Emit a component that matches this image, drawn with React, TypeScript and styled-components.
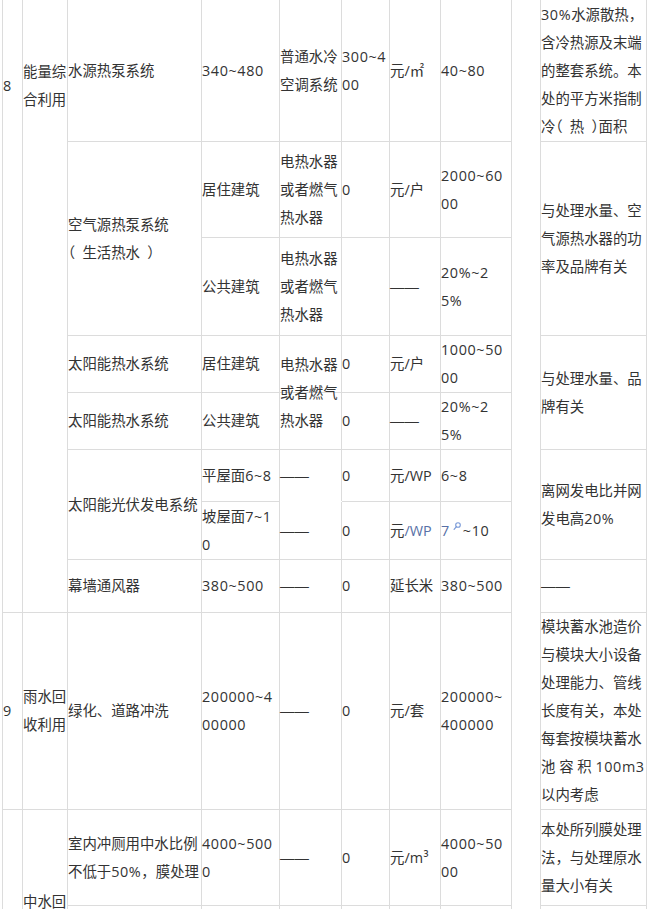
import React from 'react'
import styled, { createGlobalStyle } from 'styled-components'

const line = '#dcdcdc'

const GlobalStyle = createGlobalStyle`
  html, body {
    margin: 0;
    padding: 0;
    background: #fff;
  }
  body {
    overflow: hidden;
  }
`

// the sheet keeps the row heights of the source document, so they are fixed here
const Sheet = styled.div`
  display: grid;
  grid-template-columns: 20px 45px 134px 78px 62px 48px 51px 71px 29px 106px;
  grid-template-rows: 142px 96px 98px 57px 57px 52px 58px 53px 197px 96px 116px;
  width: max-content;
  margin: -1px 0 0 2px;
  border-top: 1px solid ${line};
  border-left: 1px solid ${line};
  font-family: "Open Sans", "Noto Sans CJK SC", sans-serif;
  font-size: 14.4px;
  line-height: 28px;
  color: #333;
  text-spacing-trim: space-all;
`

type CellProps = {
  $c: number
  $r: number
  $rs?: number
  $top?: number
  $open?: boolean
  $over?: boolean
}

const Cell = styled.div<CellProps>`
  grid-column: ${p => p.$c} / span 1;
  grid-row: ${p => p.$r} / span ${p => p.$rs ?? 1};
  display: flex;
  flex-direction: column;
  justify-content: ${p => (p.$top != null ? 'flex-start' : 'center')};
  padding-top: ${p => p.$top ?? 0}px;
  border-right: ${p => (p.$over ? 'none' : `1px solid ${line}`)};
  border-bottom: ${p => (p.$over || p.$open ? 'none' : `1px solid ${line}`)};
  margin-bottom: ${p => (p.$open && !p.$over ? '1px' : '0')};
  white-space: nowrap;
  min-width: 0;
  min-height: 0;
  z-index: ${p => (p.$over ? 1 : 0)};
`

const Lines = styled.div`
  display: block;
`

const Num = styled.span`
  letter-spacing: 0.6px;
`

const Dash = styled.span`
  font-family: "Liberation Sans", sans-serif;
  letter-spacing: 0;
`

// full-width brackets drawn with their open side inwards, as the source font does
const Paren = styled.span<{ $close?: boolean }>`
  font-feature-settings: "halt";
  margin-left: ${p => (p.$close ? '0.5em' : '0')};
  margin-right: ${p => (p.$close ? '0' : '0.5em')};
`

const Link = styled.span`
  color: #5870a6;
`

const Lens = styled.svg`
  width: 8px;
  height: 8px;
  margin: 0 2px 0 3px;
  vertical-align: 6px;
`

const SearchMark = () => (
  <Lens viewBox="0 0 8 8" aria-hidden>
    <circle cx="5" cy="3" r="2.3" fill="none" stroke="#7a9ad8" strokeWidth="1.1" />
    <path d="M3.4 4.7 L1.1 7.3" stroke="#7a9ad8" strokeWidth="1.2" strokeLinecap="round" />
  </Lens>
)

type Item = {
  c: number
  r: number
  rs?: number
  top?: number
  open?: boolean
  over?: boolean
  body?: React.ReactNode
}

const dash = <Dash>——</Dash>
const heater = <>电热水器<br />或者燃气<br />热水器</>

const items: Item[] = [
  { c: 1, r: 1, rs: 8, top: 72, body: <Num>8</Num> },
  { c: 2, r: 1, rs: 8, top: 58, body: <>能量综<br />合利用</> },
  { c: 3, r: 1, body: '水源热泵系统' },
  { c: 4, r: 1, body: <Num>340~480</Num> },
  { c: 5, r: 1, body: <>普通水冷<br />空调系统</> },
  { c: 6, r: 1, body: <Num>300~4<br />00</Num> },
  { c: 7, r: 1, body: '元/㎡' },
  { c: 8, r: 1, body: <Num>40~80</Num> },
  { c: 9, r: 1, rs: 11 },
  { c: 10, r: 1, body: <><Num>30%</Num>水源散热，<br />含冷热源及末端<br />的整套系统。本<br />处的平方米指制<br />冷<Paren>（</Paren>热<Paren $close>）</Paren>面积</> },

  { c: 3, r: 2, rs: 2, body: <>空气源热泵系统<br /><Paren>（</Paren>生活热水<Paren $close>）</Paren></> },
  { c: 4, r: 2, body: '居住建筑' },
  { c: 5, r: 2, body: heater },
  { c: 6, r: 2, body: <Num>0</Num> },
  { c: 7, r: 2, body: '元/户' },
  { c: 8, r: 2, body: <Num>2000~60<br />00</Num> },
  { c: 10, r: 2, rs: 2, body: <>与处理水量、空<br />气源热水器的功<br />率及品牌有关</> },

  { c: 4, r: 3, body: '公共建筑' },
  { c: 5, r: 3, body: heater },
  { c: 6, r: 3 },
  { c: 7, r: 3, body: dash },
  { c: 8, r: 3, body: <Num>20%~2<br />5%</Num> },

  { c: 3, r: 4, body: '太阳能热水系统' },
  { c: 4, r: 4, body: '居住建筑' },
  { c: 5, r: 4 },
  { c: 6, r: 4, body: <Num>0</Num> },
  { c: 7, r: 4, body: '元/户' },
  { c: 8, r: 4, body: <Num>1000~50<br />00</Num> },
  { c: 10, r: 4, rs: 2, body: <>与处理水量、品<br />牌有关</> },

  { c: 3, r: 5, body: '太阳能热水系统' },
  { c: 4, r: 5, body: '公共建筑' },
  { c: 5, r: 5 },
  { c: 6, r: 5, body: <Num>0</Num> },
  { c: 7, r: 5, body: dash },
  { c: 8, r: 5, body: <Num>20%~2<br />5%</Num> },
  { c: 5, r: 4, rs: 2, over: true, body: heater },

  { c: 3, r: 6, rs: 2, body: '太阳能光伏发电系统' },
  { c: 4, r: 6, body: <>平屋面<Num>6~8</Num></> },
  { c: 5, r: 6, open: true, body: dash },
  { c: 6, r: 6, body: <Num>0</Num> },
  { c: 7, r: 6, body: '元/WP' },
  { c: 8, r: 6, body: <Num>6~8</Num> },
  { c: 10, r: 6, rs: 2, body: <>离网发电比并网<br />发电高<Num>20%</Num></> },

  { c: 4, r: 7, body: <>坡屋面<Num>7~1</Num><br /><Num>0</Num></> },
  { c: 5, r: 7, body: dash },
  { c: 6, r: 7, body: <Num>0</Num> },
  { c: 7, r: 7, body: <>元<Link>/WP</Link></> },
  { c: 8, r: 7, body: <Num><Link>7</Link><SearchMark />~10</Num> },

  { c: 3, r: 8, body: '幕墙通风器' },
  { c: 4, r: 8, body: <Num>380~500</Num> },
  { c: 5, r: 8, body: dash },
  { c: 6, r: 8, body: <Num>0</Num> },
  { c: 7, r: 8, body: '延长米' },
  { c: 8, r: 8, body: <Num>380~500</Num> },
  { c: 10, r: 8, body: dash },

  { c: 1, r: 9, body: <Num>9</Num> },
  { c: 2, r: 9, body: <>雨水回<br />收利用</> },
  { c: 3, r: 9, body: '绿化、道路冲洗' },
  { c: 4, r: 9, body: <Num>200000~4<br />00000</Num> },
  { c: 5, r: 9, body: dash },
  { c: 6, r: 9, body: <Num>0</Num> },
  { c: 7, r: 9, body: '元/套' },
  { c: 8, r: 9, body: <Num>200000~<br />400000</Num> },
  { c: 10, r: 9, body: <>模块蓄水池造价<br />与模块大小设备<br />处理能力、管线<br />长度有关，本处<br />每套按模块蓄水<br />池 容 积 <Num>100m3</Num><br />以内考虑</> },

  { c: 1, r: 10, rs: 2, body: <Num>10</Num> },
  { c: 2, r: 10, rs: 2, body: <>中水回<br />用</> },
  { c: 3, r: 10, body: <>室内冲厕用中水比例<br />不低于<Num>50%</Num>，膜处理</> },
  { c: 4, r: 10, body: <Num>4000~500<br />0</Num> },
  { c: 5, r: 10, body: dash },
  { c: 6, r: 10, body: <Num>0</Num> },
  { c: 7, r: 10, body: <>元/<Num>m³</Num></> },
  { c: 8, r: 10, body: <Num>4000~50<br />00</Num> },
  { c: 10, r: 10, body: <>本处所列膜处理<br />法，与处理原水<br />量大小有关</> },

  { c: 3, r: 11 },
  { c: 4, r: 11 },
  { c: 5, r: 11 },
  { c: 6, r: 11 },
  { c: 7, r: 11 },
  { c: 8, r: 11 },
  { c: 10, r: 11 },
]

const App = () => {
  return (
    <>
      <GlobalStyle />
      <Sheet>
        {items.map((it, i) => (
          <Cell
            key={i}
            $c={it.c}
            $r={it.r}
            $rs={it.rs}
            $top={it.top}
            $open={it.open}
            $over={it.over}
          >
            <Lines>{it.body}</Lines>
          </Cell>
        ))}
      </Sheet>
    </>
  )
}

export default App
